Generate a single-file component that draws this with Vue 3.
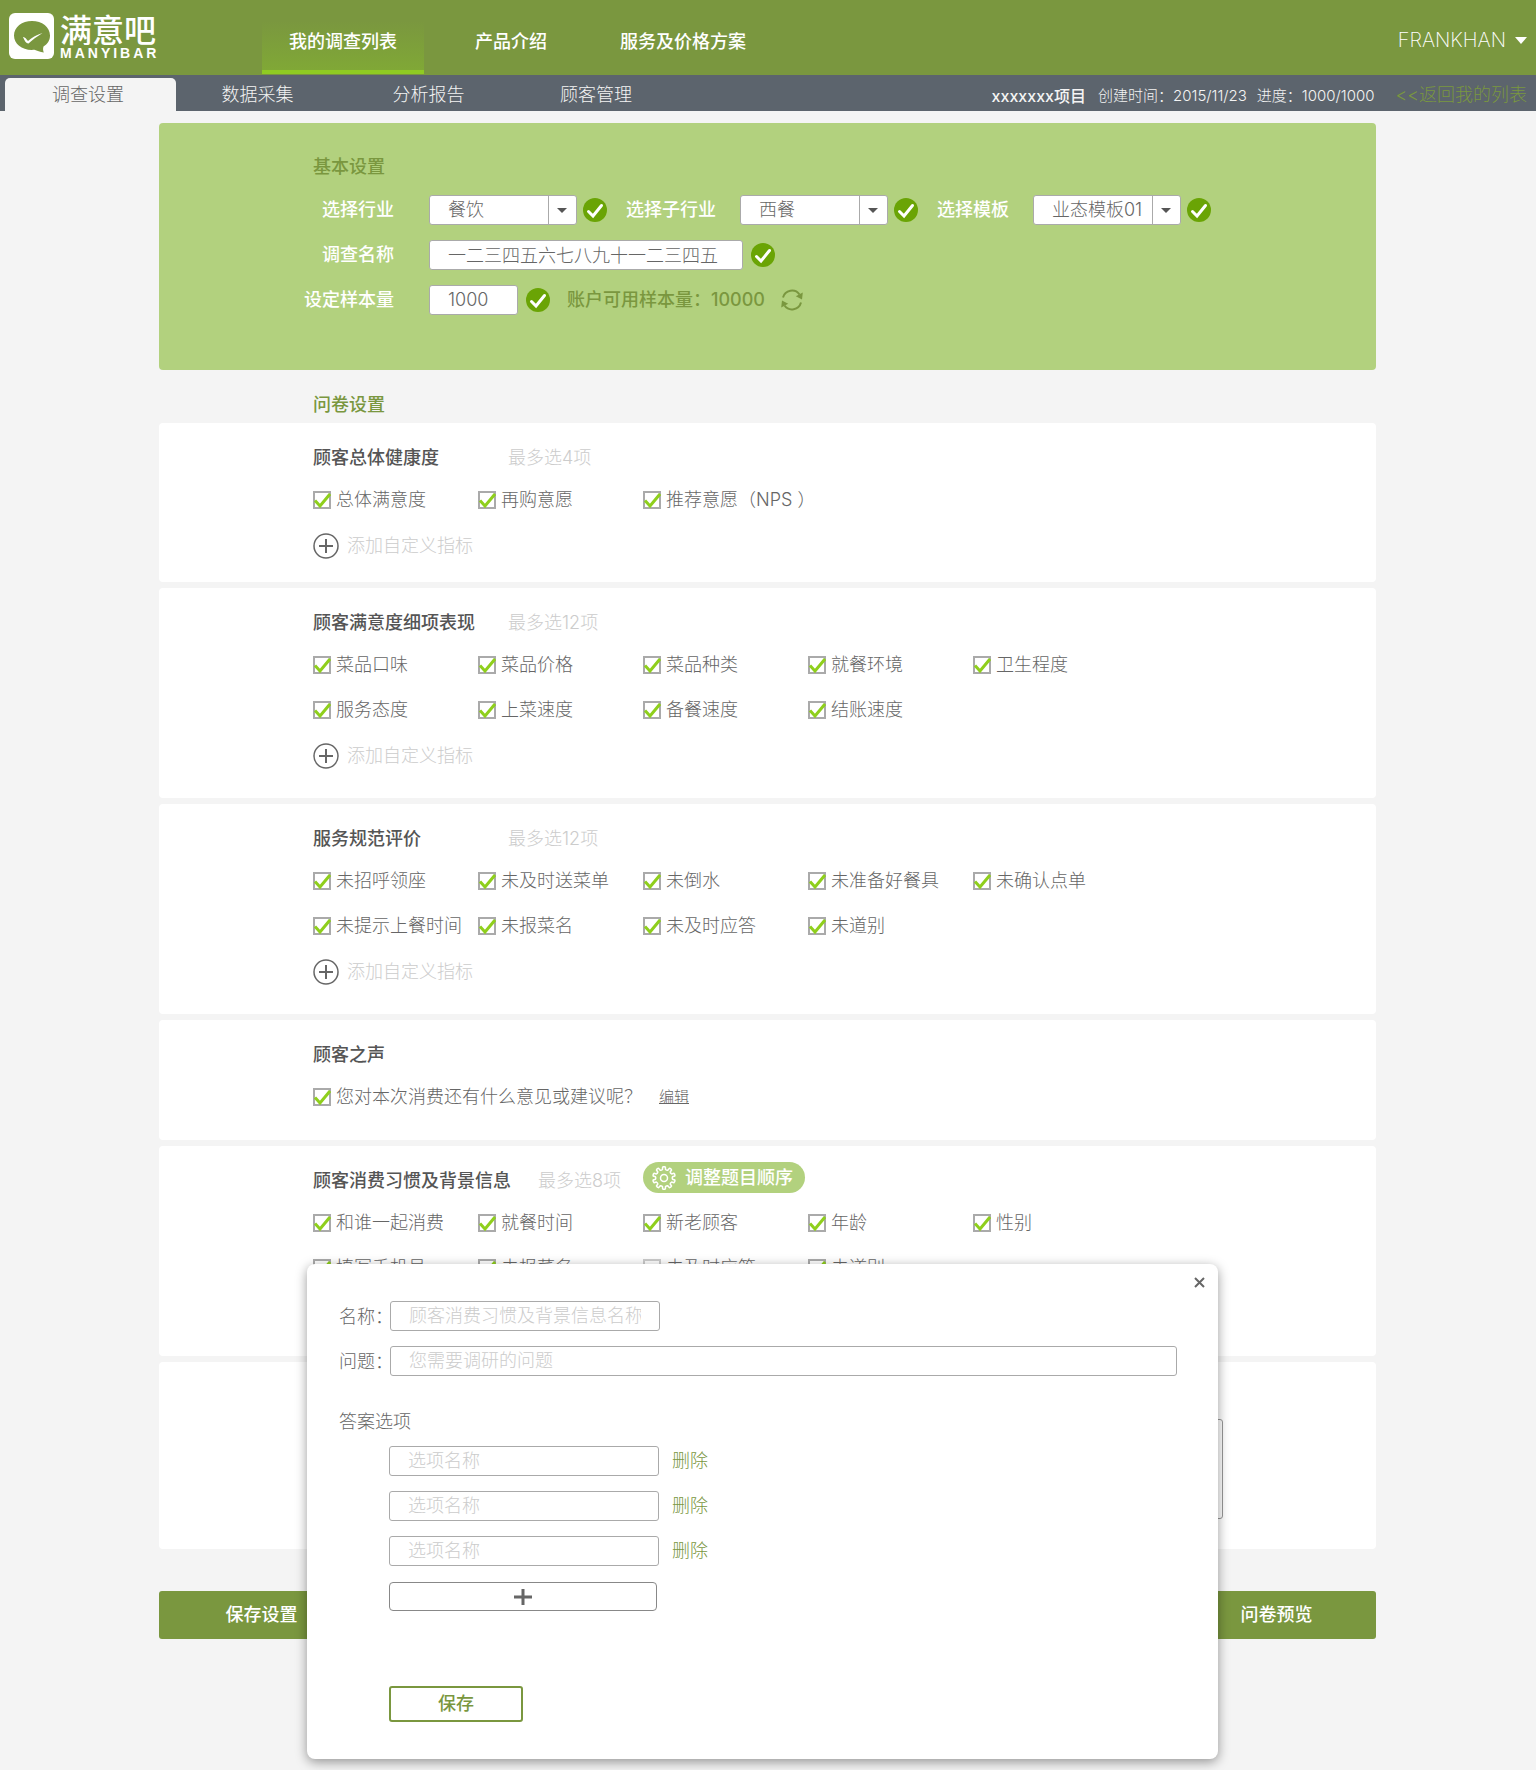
<script setup>
import { reactive, ref } from 'vue'

const mainNav = ['我的调查列表', '产品介绍', '服务及价格方案']
const subNav = ['调查设置', '数据采集', '分析报告', '顾客管理']

const selects = reactive([
  { id: 'industry', label: '选择行业', value: '餐饮', options: ['餐饮'] },
  { id: 'sub-industry', label: '选择子行业', value: '西餐', options: ['西餐'] },
  { id: 'template', label: '选择模板', value: '业态模板01', options: ['业态模板01'] },
])
const surveyName = ref('一二三四五六七八九十一二三四五')
const sampleSize = ref('1000')

const on = (label) => ({ label, checked: true })
const off = (label) => ({ label, checked: false })

const cards = reactive([
  {
    title: '顾客总体健康度', hint: '最多选4项', kind: 'short', addable: true,
    items: ['总体满意度', '再购意愿', '推荐意愿（NPS ）'].map(on),
  },
  {
    title: '顾客满意度细项表现', hint: '最多选12项', kind: 'tall', addable: true,
    items: ['菜品口味', '菜品价格', '菜品种类', '就餐环境', '卫生程度', '服务态度', '上菜速度', '备餐速度', '结账速度'].map(on),
  },
  {
    title: '服务规范评价', hint: '最多选12项', kind: 'tall', addable: true,
    items: ['未招呼领座', '未及时送菜单', '未倒水', '未准备好餐具', '未确认点单', '未提示上餐时间', '未报菜名', '未及时应答', '未道别'].map(on),
  },
  {
    title: '顾客之声', kind: 'voice', editable: true,
    items: [on('您对本次消费还有什么意见或建议呢？')],
  },
  {
    title: '顾客消费习惯及背景信息', hint: '最多选8项', kind: 'tall', sortable: true, dialog: true,
    items: [
      ...['和谁一起消费', '就餐时间', '新老顾客', '年龄', '性别', '填写手机号', '未报菜名'].map(on),
      off('未及时应答'),
      on('未道别'),
    ],
  },
])

const question = reactive({ name: '', text: '', answers: ['', '', ''] })
const remark = ref('')

// Outline of the cog: ten rounded teeth around a 24px circle
const teeth = 10
const cogPath = (() => {
  const at = (r, a) => `${(12 + r * Math.sin(a)).toFixed(2)} ${(12 - r * Math.cos(a)).toFixed(2)}`
  const step = (Math.PI * 2) / teeth
  let d = ''
  for (let i = 0; i < teeth; i++) {
    const a = i * step
    d += `${i ? 'L' : 'M'}${at(8.6, a - step * 0.28)}L${at(11, a - step * 0.2)}`
    d += `Q${at(11.8, a)} ${at(11, a + step * 0.2)}L${at(8.6, a + step * 0.28)}`
    d += `Q${at(8, a + step * 0.5)} ${at(8.6, a + step * 0.72)}`
  }
  return d + 'Z'
})()
</script>

<template>
  <div class="page">
    <header class="topbar">
      <a class="logo" href="#">
        <svg class="logo-mark" viewBox="0 0 45 46" aria-hidden="true">
          <rect width="45" height="46" rx="6" fill="#fff" />
          <path d="M23 8C33 8 41 14 41 22.500C41 27.500 38.500 31 34.500 33.500C33.800 35.500 34 37.500 34.800 39.500C31 39 28 38 25.500 36.800C14 38 5 31.500 5 22.500C5 14 13 8 23 8Z" fill="#7a973f" />
          <path d="M14 24C15.500 23.500 17.500 26 19 28C23 24.500 28 21.500 33.500 20C28 23.500 23 27 19.500 30.500C17.500 30.800 15.500 28 14 24Z" fill="#fff" />
        </svg>
        <span class="logo-words">
          <span class="logo-cn">满意吧</span>
          <span class="logo-en">MANYIBAR</span>
        </span>
      </a>
      <nav class="main-nav">
        <a v-for="(item, i) in mainNav" :key="item" href="#" :class="{ active: i === 0 }">{{ item }}</a>
      </nav>
      <button class="user" type="button">
        FRANKHAN
        <svg width="12" height="7" viewBox="0 0 12 7" aria-hidden="true"><path d="M0 0h12L6 7z" fill="#fff" /></svg>
      </button>
    </header>

    <div class="subbar">
      <nav class="sub-nav">
        <a v-for="(item, i) in subNav" :key="item" href="#" :class="{ active: i === 0 }">{{ item }}</a>
      </nav>
      <div class="project">
        <strong>xxxxxxx项目</strong>
        <span>创建时间：2015/11/23</span>
        <span>进度：1000/1000</span>
      </div>
      <a class="back" href="#">&lt;&lt;返回我的列表</a>
    </div>

    <main>
      <section class="basic">
        <h2>基本设置</h2>
        <div class="field-row">
          <template v-for="s in selects" :key="s.id">
            <label :for="s.id">{{ s.label }}</label>
            <span class="select">
              <select :id="s.id" v-model="s.value">
                <option v-for="o in s.options" :key="o">{{ o }}</option>
              </select>
              <svg width="10" height="5" viewBox="0 0 10 5" aria-hidden="true"><path d="M0 0h10L5 5z" fill="#555" /></svg>
            </span>
            <svg class="ok" viewBox="0 0 24 24" aria-hidden="true"><circle cx="12" cy="12" r="12" fill="#6aa405" /><path d="M5.500 13.500l4.500 4.500L18.500 7.500" /></svg>
          </template>
        </div>
        <div class="field-row">
          <label for="survey-name">调查名称</label>
          <input id="survey-name" v-model="surveyName" class="name" type="text">
          <svg class="ok" viewBox="0 0 24 24" aria-hidden="true"><circle cx="12" cy="12" r="12" fill="#6aa405" /><path d="M5.500 13.500l4.500 4.500L18.500 7.500" /></svg>
        </div>
        <div class="field-row">
          <label for="sample-size">设定样本量</label>
          <input id="sample-size" v-model="sampleSize" class="size" type="text">
          <svg class="ok" viewBox="0 0 24 24" aria-hidden="true"><circle cx="12" cy="12" r="12" fill="#6aa405" /><path d="M5.500 13.500l4.500 4.500L18.500 7.500" /></svg>
          <span class="quota">账户可用样本量：10000</span>
          <button class="refresh" type="button" aria-label="刷新">
            <svg width="22" height="22" viewBox="0 0 22 22" aria-hidden="true">
              <path d="M2 8.500A9.300 9.300 0 0 1 18.500 5.500M20 13.500A9.300 9.300 0 0 1 3.500 16.500" fill="none" stroke="#7a973f" stroke-width="2" />
              <path d="M21.800 3.500l-.8 7-6.200-3.300zM.2 18.500l.8-7 6.200 3.300z" fill="#7a973f" />
            </svg>
          </button>
        </div>
      </section>

      <h2 class="section-title">问卷设置</h2>

      <div class="cards">
        <section v-for="card in cards" :key="card.title" class="card" :class="card.kind">
          <div class="card-head">
            <h3>{{ card.title }}</h3>
            <span v-if="card.hint" class="hint">{{ card.hint }}</span>
            <button v-if="card.sortable" class="sort" type="button">
              <svg width="24" height="24" viewBox="0 0 24 24" fill="none" stroke="#fff" stroke-width="1.500" stroke-linejoin="round" aria-hidden="true">
                <path :d="cogPath" />
                <circle cx="12" cy="12" r="3.500" />
              </svg>
              调整题目顺序
            </button>
          </div>
          <div class="options">
            <label v-for="item in card.items" :key="item.label" class="option">
              <span class="tick">
                <input v-model="item.checked" type="checkbox">
                <svg v-if="item.checked" viewBox="0 0 18 18" aria-hidden="true"><path d="M2 9.500l5 5.500L17 3" /></svg>
              </span>
              {{ item.label }}
            </label>
            <a v-if="card.editable" class="edit" href="#">编辑</a>
          </div>
          <button v-if="card.addable" class="add" type="button">
            <svg width="26" height="26" viewBox="0 0 26 26" fill="none" stroke="#666" aria-hidden="true">
              <circle cx="13" cy="13" r="12" stroke-width="1.500" />
              <path d="M13 6v14M6 13h14" stroke-width="2" />
            </svg>
            添加自定义指标
          </button>

          <form v-if="card.dialog" class="dialog" @submit.prevent>
            <button class="close" type="button" aria-label="关闭">
              <svg width="11" height="11" viewBox="0 0 11 11" aria-hidden="true"><path d="M1 1l9 9M10 1l-9 9" stroke="#666" stroke-width="2" /></svg>
            </button>
            <div class="dialog-row">
              <label for="q-name">名称：</label>
              <input id="q-name" v-model="question.name" class="medium" type="text" placeholder="顾客消费习惯及背景信息名称">
            </div>
            <div class="dialog-row">
              <label for="q-text">问题：</label>
              <input id="q-text" v-model="question.text" class="wide" type="text" placeholder="您需要调研的问题">
            </div>
            <fieldset>
              <legend>答案选项</legend>
              <div class="answers">
                <div v-for="(_, i) in question.answers" :key="i" class="answer">
                  <input v-model="question.answers[i]" class="medium" type="text" placeholder="选项名称" :aria-label="`选项名称 ${i + 1}`">
                  <button class="remove" type="button">删除</button>
                </div>
              </div>
              <button class="more" type="button" aria-label="添加选项">
                <svg width="18" height="16" viewBox="0 0 18 16" aria-hidden="true"><path d="M9 0v16M0 8h18" stroke="#666" stroke-width="3" /></svg>
              </button>
            </fieldset>
            <button class="save" type="submit">保存</button>
          </form>
        </section>

        <section class="card remark">
          <textarea v-model="remark" aria-label="备注"></textarea>
        </section>
      </div>

      <div class="actions">
        <button type="button">保存设置</button>
        <button type="button">问卷预览</button>
      </div>
    </main>
  </div>
</template>

<style>
body {
  margin: 0;
  background: #f4f4f4;
}
</style>

<style scoped>
.page {
  min-height: 100vh;
  background: #f4f4f4;
  color: #666;
  font-family: Inter, "Noto Sans CJK SC", sans-serif;
  font-size: 18px;
  font-weight: 300;
  line-height: 24px;
}
.page *,
.page *::before {
  box-sizing: border-box;
}
h2,
h3 {
  margin: 0;
  font-size: 18px;
  font-weight: 500;
}
a {
  color: inherit;
  text-decoration: none;
}
button,
input,
select,
textarea {
  margin: 0;
  padding: 0;
  border: 0;
  background: none;
  color: inherit;
  font: inherit;
}
button {
  cursor: pointer;
}

.topbar {
  display: flex;
  height: 75px;
  background: #7a973f;
  color: #fff;
}
.logo {
  display: flex;
  gap: 6px;
  width: 262px;
  padding: 13px 0 0 9px;
}
.logo-mark {
  width: 45px;
  height: 46px;
}
.logo-words {
  display: flex;
  flex-direction: column;
}
.logo-cn {
  font-size: 32px;
  font-weight: 500;
  line-height: 35px;
}
.logo-en {
  font-family: "Liberation Sans", sans-serif;
  font-size: 14px;
  font-weight: 700;
  line-height: 10px;
  letter-spacing: 3px;
}
.main-nav {
  display: grid;
  grid-template-columns: 162px 174px 170px;
}
.main-nav a {
  padding-top: 30px;
  border-bottom: 4px solid transparent;
  margin-bottom: 1px;
  text-align: center;
  font-weight: 500;
}
.main-nav .active {
  border-bottom-color: #8fcb22;
  background: linear-gradient(#7a973f 30%, #80a836);
}
.user {
  display: flex;
  align-items: center;
  gap: 9px;
  height: 24px;
  margin: 28px 9px 0 auto;
  font-size: 20px;
  font-weight: 200;
}

.subbar {
  display: flex;
  height: 36px;
  background: #5c646d;
  color: #f4f4f4;
}
.sub-nav {
  display: grid;
  grid-template-columns: 171px 168px 174px 161px;
  padding: 3px 0 0 5px;
}
.sub-nav a {
  padding: 5px 5px 0 0;
  text-align: center;
}
.sub-nav .active {
  border-radius: 5px 5px 0 0;
  background: #f4f4f4;
  color: #666;
}
.project {
  display: flex;
  gap: 10px;
  margin-left: auto;
  padding-top: 9px;
  font-size: 15px;
}
.project strong {
  margin-right: 2px;
  font-size: 16px;
  font-weight: 500;
}
.back {
  margin: 0 9px 0 21px;
  padding-top: 8px;
  color: #7a973f;
}

main {
  padding: 12px 160px 130px 159px;
}
.basic {
  display: flex;
  flex-direction: column;
  gap: 15px;
  padding: 28px 0 55px 143px;
  border-radius: 4px;
  background: #b2d17e;
  color: #fff;
}
.basic h2 {
  padding: 4px 0 1px 11px;
  color: #7a973f;
}
.field-row {
  display: flex;
  align-items: center;
  height: 30px;
}
.field-row label {
  margin: 0 24px 0 19px;
  font-weight: 500;
}
.field-row label:first-child {
  width: 92px;
  margin: 0 35px 0 0;
  text-align: right;
}
.field-row input,
.select {
  height: 30px;
  border: 1px solid #aaa;
  border-radius: 3px;
  background: #fff;
  color: #666;
}
.field-row input {
  padding: 0 18px 2px;
}
.field-row .name {
  width: 314px;
}
.field-row .size {
  width: 89px;
}
.select {
  display: grid;
  grid-template-columns: 118px 28px;
  align-items: center;
  justify-items: center;
}
.select select {
  grid-area: 1 / 1 / 2 / 3;
  width: 100%;
  height: 28px;
  padding-left: 18px;
  appearance: none;
}
.select svg {
  grid-area: 1 / 2;
  pointer-events: none;
}
.select::before {
  grid-area: 1 / 2;
  justify-self: start;
  width: 1px;
  height: 28px;
  background: #aaa;
  content: "";
}
.ok {
  width: 24px;
  height: 24px;
  margin-left: 6px;
}
input + .ok {
  margin-left: 8px;
}
.ok path {
  fill: none;
  stroke: #fff;
  stroke-width: 3;
  stroke-linecap: round;
}
.quota {
  margin: 0 16px 0 17px;
  color: #7a973f;
  font-weight: 500;
}
.refresh {
  display: flex;
}

.section-title {
  padding: 23px 0 6px 154px;
  color: #7a973f;
}
.cards {
  display: flex;
  flex-direction: column;
  gap: 6px;
}
.card {
  position: relative;
  padding: 16px 0 20px 154px;
  border-radius: 4px;
  background: #fff;
}
.card.short {
  min-height: 159px;
}
.card.tall {
  min-height: 210px;
}
.card.voice {
  min-height: 120px;
}
.card-head {
  display: flex;
  align-items: flex-end;
  height: 34px;
  line-height: 30px;
}
.card-head h3 {
  min-width: 168px;
  margin-right: 27px;
  color: #555;
}
.hint,
.add {
  color: #ccc;
}
.sort {
  display: flex;
  align-self: flex-start;
  align-items: center;
  gap: 9px;
  height: 31px;
  margin-left: 22px;
  padding: 0 12px 0 9px;
  border-radius: 16px;
  background: #b2d17e;
  color: #fff;
  font-weight: 500;
}
.options {
  display: grid;
  grid-template-columns: repeat(5, 165px);
  row-gap: 21px;
  margin-top: 15px;
}
.option {
  display: flex;
  align-items: center;
  gap: 5px;
  white-space: nowrap;
}
.voice .options {
  display: flex;
  align-items: center;
  gap: 17px;
}
.tick {
  display: grid;
  width: 18px;
  height: 18px;
}
.tick input {
  grid-area: 1 / 1;
  width: 18px;
  height: 18px;
  border: 2px solid #ccc;
  appearance: none;
}
.tick input:checked {
  border-color: #aaa;
}
.tick svg {
  z-index: 0;
  grid-area: 1 / 1;
  pointer-events: none;
}
.tick path {
  fill: none;
  stroke: #8fcf1c;
  stroke-width: 3;
}
.edit {
  font-size: 15px;
  text-decoration: underline;
}
.add {
  display: flex;
  align-items: center;
  gap: 8px;
  margin-top: 21px;
}

.dialog {
  position: absolute;
  z-index: 1;
  top: 118px;
  right: 158px;
  left: 148px;
  padding: 37px 41px 37px 32px;
  border-radius: 8px;
  background: #fff;
  box-shadow: 0 3px 12px rgba(0, 0, 0, 0.4);
}
.close {
  position: absolute;
  top: 13px;
  right: 13px;
  display: flex;
}
.dialog input {
  height: 30px;
  padding: 0 18px 2px;
  border: 1px solid #aaa;
  border-radius: 3px;
}
.dialog input::placeholder {
  color: #ccc;
  opacity: 1;
}
.dialog-row {
  display: flex;
  align-items: center;
  margin-bottom: 15px;
}
.dialog-row label {
  width: 51px;
  padding-top: 1px;
  white-space: nowrap;
}
.medium {
  width: 270px;
}
.wide {
  flex: 1;
}
fieldset {
  min-width: 0;
  margin: 31px 0 0;
  padding: 9px 0 0;
  border: 0;
}
legend {
  padding: 0;
  line-height: 30px;
}
.answers {
  display: flex;
  flex-direction: column;
  gap: 15px;
  margin-left: 50px;
}
.answer {
  display: flex;
  align-items: center;
  gap: 13px;
}
.remove {
  color: #7a973f;
}
.more {
  display: flex;
  align-items: center;
  justify-content: center;
  width: 268px;
  height: 29px;
  margin: 16px 0 0 50px;
  border: 1px solid #888;
  border-radius: 4px;
}
.save {
  width: 134px;
  height: 36px;
  margin: 75px 0 0 50px;
  border: 2px solid #7a973f;
  border-radius: 3px;
  color: #7a973f;
  font-weight: 500;
}

.card.remark {
  padding: 57px 153px 30px 154px;
}
.remark textarea {
  display: block;
  width: 100%;
  height: 100px;
  border: 1px solid #999;
  border-radius: 3px;
  resize: none;
}
.actions {
  display: flex;
  justify-content: space-between;
  margin-top: 42px;
}
.actions button {
  width: 202px;
  height: 48px;
  padding-left: 3px;
  border-radius: 3px;
  background: #7a973f;
  color: #fff;
  font-weight: 500;
}
</style>
